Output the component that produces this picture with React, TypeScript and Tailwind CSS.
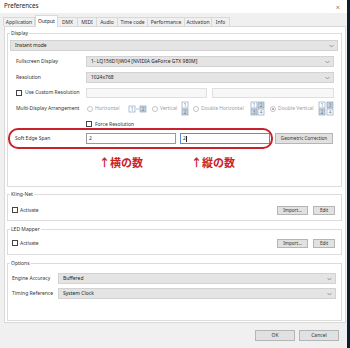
import React from "react";

const tabs = [
  { name: "Application", w: "w-[32px]" },
  { name: "Output", w: "w-[23px]", active: true },
  { name: "DMX", w: "w-[21px]" },
  { name: "MIDI", w: "w-[20px]" },
  { name: "Audio", w: "w-[22px]" },
  { name: "Time code", w: "w-[31px]" },
  { name: "Performance", w: "w-[38px]" },
  { name: "Activation", w: "w-[28px]" },
  { name: "Info", w: "w-[19px]" },
];

const Chevron = () => (
  <svg width="5" height="4" viewBox="0 0 5 4" className="shrink-0">
    <path d="M0.5 1 L2.5 3 L4.5 1" fill="none" stroke="#7a7a7a" strokeWidth="0.7" />
  </svg>
);

const Dropdown = ({ text, className = "" }: { text: string; className?: string }) => (
  <div
    className={`flex h-[11px] items-center justify-between border border-[#d2d2d2] bg-[#e4e4e4] pl-[4px] pr-[3px] text-[5px] text-[#222] ${className}`}
  >
    <span>{text}</span>
    <Chevron />
  </div>
);

const Checkbox = () => <div className="h-[6px] w-[6px] shrink-0 border border-[#444] bg-white" />;

const Radio = ({ on = false }: { on?: boolean }) => (
  <div className="flex h-[6px] w-[6px] shrink-0 items-center justify-center rounded-full border border-[#c4c4c4] bg-white">
    {on && <div className="h-[2px] w-[2px] rounded-full bg-[#9a9a9a]" />}
  </div>
);

const Btn = ({ label, className = "" }: { label: string; className?: string }) => (
  <div
    className={`flex items-center justify-center border border-[#b5b5b5] bg-[#e1e1e1] text-[4.6px] text-[#333] ${className}`}
  >
    {label}
  </div>
);

const Box = ({ x, y, n, fill = false }: { x: number; y: number; n: string; fill?: boolean }) => (
  <g>
    <rect x={x} y={y} width="6" height="6" fill={fill ? "#c9d3de" : "#fff"} stroke="#7f97b0" strokeWidth="0.6" />
    <text x={x + 3} y={y + 4.8} fontSize="4.6" textAnchor="middle" fill="#5d7792" fontFamily="Noto Sans">
      {n}
    </text>
  </g>
);

const Group = ({
  label,
  className,
  children,
}: {
  label: string;
  className: string;
  children?: React.ReactNode;
}) => (
  <div className={`relative ml-[2px] w-[335px] border border-[#dcdcdc] ${className}`}>
    <span className="absolute -top-[4px] left-[2px] bg-white px-[1px] text-[5px] leading-[7px] text-[#333]">
      {label}
    </span>
    {children}
  </div>
);

export default function App() {
  return (
    <div className="flex h-[348px] w-[350px] overflow-hidden bg-[#f0f0f0] font-['Noto_Sans',sans-serif] leading-none">
      <div className="flex w-[347px] flex-col">
        <div className="flex h-[13px] items-center justify-between bg-white pl-[4px] pr-[7px]">
          <span className="text-[6.2px] text-[#222]">Preferences</span>
          <span className="text-[8px] font-light text-[#444]">×</span>
        </div>

        <div className="flex flex-1 flex-col pl-[4px]">
          <div className="flex h-[13px] items-end">
            {tabs.map((t) =>
              t.active ? (
                <div
                  key={t.name}
                  className={`${t.w} relative z-10 -mb-px flex h-[12px] items-center justify-center border border-b-0 border-[#d9d9d9] bg-white text-[5px] text-[#222]`}
                >
                  {t.name}
                </div>
              ) : (
                <div
                  key={t.name}
                  className={`${t.w} -ml-px flex h-[9px] items-center justify-center border border-b-0 border-[#d9d9d9] bg-[#f0f0f0] text-[5px] text-[#333]`}
                >
                  {t.name}
                </div>
              )
            )}
          </div>

          <div className="flex h-[297px] w-[342px] flex-col border border-[#d9d9d9] bg-white">
            <Group label="Display" className="mt-[6px] h-[154px]">
              <div className="flex flex-col pt-[6px] text-[5px] text-[#333]">
                <Dropdown text="Instant mode" className="ml-[2px] w-[328px]" />

                <div className="mt-[5px] flex h-[11px] items-center">
                  <span className="w-[78px] pl-[8px]">Fullscreen Display</span>
                  <Dropdown text="1- LQ156D1JW04 [NVIDIA GeForce GTX 980M]" className="w-[248px]" />
                </div>
                <div className="mt-[5px] flex h-[11px] items-center">
                  <span className="w-[78px] pl-[8px]">Resolution</span>
                  <Dropdown text="1024x768" className="w-[248px]" />
                </div>
                <div className="mt-[4px] flex h-[11px] items-center">
                  <div className="flex w-[78px] items-center gap-[3px] pl-[8px]">
                    <Checkbox />
                    <span>Use Custom Resolution</span>
                  </div>
                  <div className="h-[10px] w-[121px] border border-[#e0e0e0] bg-[#f7f7f7]" />
                  <div className="ml-[5px] h-[10px] w-[122px] border border-[#e0e0e0] bg-[#f7f7f7]" />
                </div>

                <div className="mt-[3px] flex h-[15px] items-center text-[#a0a0a0]">
                  <span className="w-[78px] pl-[8px] text-[#333]">Multi-Display Arrangement</span>
                  <div className="flex w-[66px] items-center">
                    <div className="ml-[1px]">
                      <Radio />
                    </div>
                    <span className="ml-[2px] w-[33px]">Horizontal</span>
                    <svg width="20" height="8" viewBox="0 0 20 8">
                      <Box x={1} y={1} n="1" />
                      <Box x={12} y={1} n="2" fill />
                      <path d="M8 4 L11 4" stroke="#7f97b0" strokeWidth="0.6" />
                    </svg>
                  </div>
                  <div className="flex w-[40px] items-center">
                    <Radio />
                    <span className="ml-[2px] w-[21px]">Vertical</span>
                    <svg width="9" height="15" viewBox="0 0 9 15">
                      <Box x={1} y={1} n="1" />
                      <Box x={1} y={8} n="2" fill />
                    </svg>
                  </div>
                  <div className="flex w-[76px] items-center">
                    <div className="ml-[1px]">
                      <Radio />
                    </div>
                    <span className="ml-[2px] w-[49px]">Double Horizontal</span>
                    <svg width="15" height="15" viewBox="0 0 15 15">
                      <Box x={1} y={1} n="1" />
                      <Box x={8} y={1} n="2" fill />
                      <Box x={1} y={8} n="3" fill />
                      <Box x={8} y={8} n="4" />
                    </svg>
                  </div>
                  <div className="flex w-[66px] items-center">
                    <div className="ml-[2px]">
                      <Radio on />
                    </div>
                    <span className="ml-[2px] w-[40px]">Double Vertical</span>
                    <svg width="16" height="15" viewBox="0 0 16 15">
                      <Box x={1} y={1} n="1" />
                      <Box x={9} y={1} n="3" fill />
                      <Box x={1} y={8} n="2" fill />
                      <Box x={9} y={8} n="4" />
                    </svg>
                  </div>
                </div>

                <div className="mt-[3px] flex h-[10px] items-center">
                  <span className="w-[78px]" />
                  <Checkbox />
                  <span className="ml-[3px]">Force Resolution</span>
                </div>

                <div className="relative mt-[4px] flex h-[11px] items-center">
                  <span className="w-[78px] pl-[7px]">Soft Edge Span</span>
                  <div className="flex h-[11px] w-[90px] items-center border border-[#9a9a9a] bg-white pl-[2px]">2</div>
                  <div className="ml-[4px] flex h-[11px] w-[90px] items-center border border-[#5a8fd0] bg-white pl-[2px]">
                    2<span className="ml-[0.5px] h-[6px] w-[0.6px] bg-[#222]" />
                  </div>
                  <Btn label="Geometric Correction" className="ml-[5px] h-[11px] w-[58px]" />
                  <div className="absolute -top-[5px] left-0 h-[21px] w-[265px] rounded-[10px] border-2 border-[#c8222a]" />
                </div>

                <div className="mt-[11px] flex h-[15px] items-center font-['Noto_Sans_CJK_JP',sans-serif] text-[11px] font-bold text-[#c8222a]">
                  <span className="ml-[91px] w-[92px]">↑横の数</span>
                  <span>↑縦の数</span>
                </div>
              </div>
            </Group>

            <Group label="Kling-Net" className="mt-[7px] h-[27px]">
              <div className="mt-[10px] flex h-[10px] items-center text-[5px] text-[#333]">
                <div className="ml-[4px]">
                  <Checkbox />
                </div>
                <span className="ml-[2px]">Activate</span>
                <Btn label="Import..." className="ml-auto h-[9px] w-[31px]" />
                <Btn label="Edit" className="ml-[5px] mr-[6px] h-[9px] w-[22px]" />
              </div>
            </Group>

            <Group label="LED Mapper" className="mt-[8px] h-[26px]">
              <div className="mt-[8px] flex h-[10px] items-center text-[5px] text-[#333]">
                <div className="ml-[4px]">
                  <Checkbox />
                </div>
                <span className="ml-[2px]">Activate</span>
                <Btn label="Import..." className="ml-auto h-[9px] w-[31px]" />
                <Btn label="Edit" className="ml-[5px] mr-[6px] h-[9px] w-[22px]" />
              </div>
            </Group>

            <Group label="Options" className="mt-[8px] h-[58px]">
              <div className="flex flex-col pt-[9px] text-[5px] text-[#333]">
                <div className="flex h-[11px] items-center">
                  <span className="w-[50px] pl-[4px]">Engine Accuracy</span>
                  <Dropdown text="Buffered" className="w-[278px]" />
                </div>
                <div className="mt-[4px] flex h-[11px] items-center">
                  <span className="w-[50px] pl-[4px]">Timing Reference</span>
                  <Dropdown text="System Clock" className="w-[278px]" />
                </div>
              </div>
            </Group>
          </div>

          <div className="mt-[7px] flex justify-end gap-[4px] pr-[8px]">
            <Btn label="OK" className="h-[11px] w-[40px] text-[5px]" />
            <Btn label="Cancel" className="h-[11px] w-[40px] text-[5px]" />
          </div>
        </div>
      </div>
      <div className="w-[3px] bg-[#0f1d30]" />
    </div>
  );
}
